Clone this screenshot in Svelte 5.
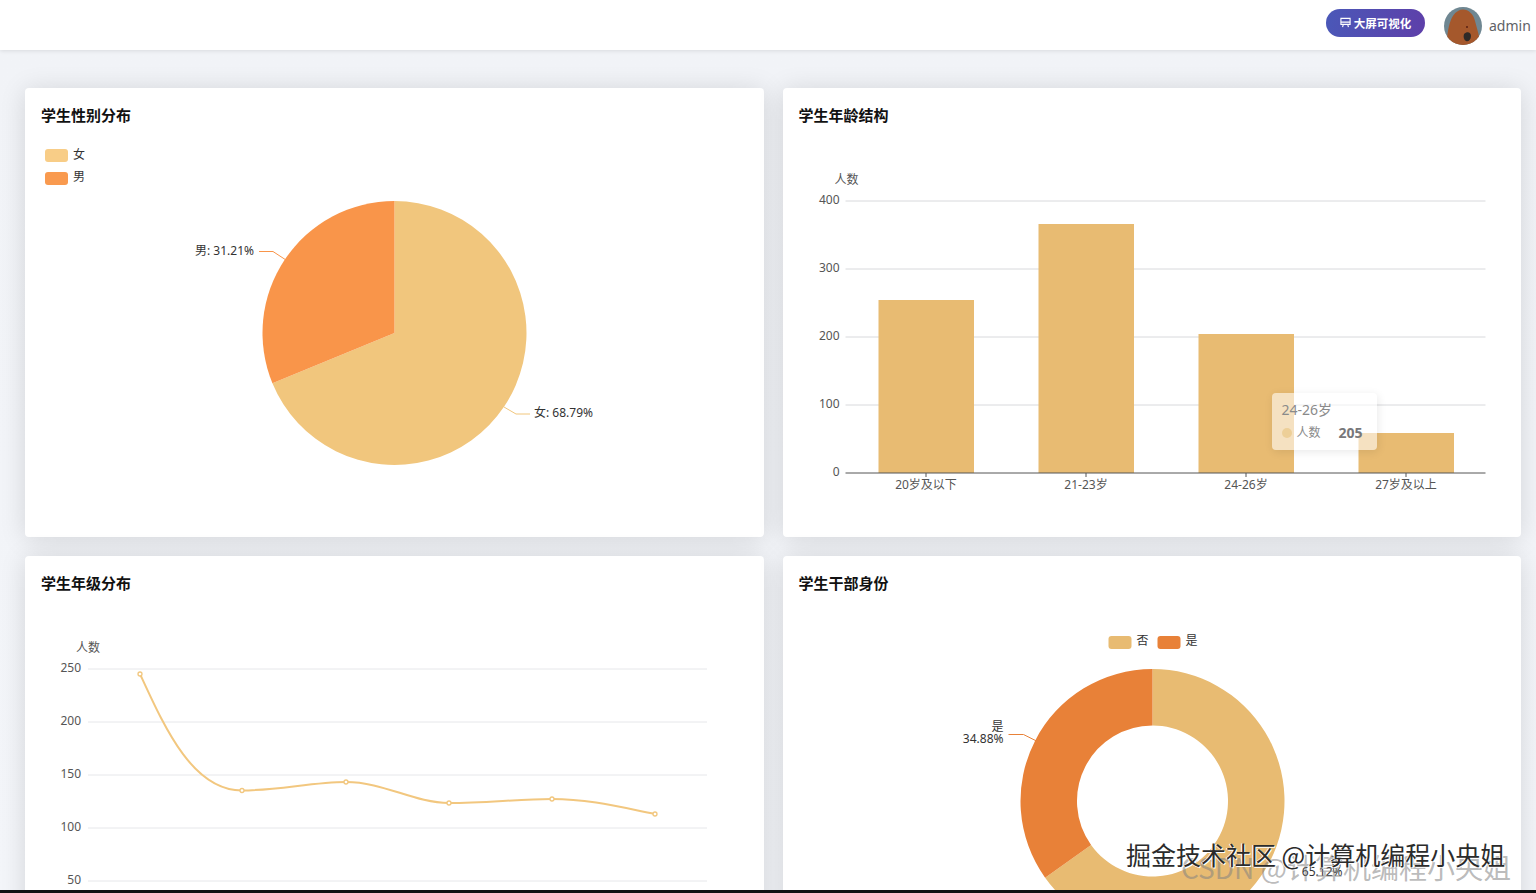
<script>
  // chart data, coordinates are screen px (viewBox of each svg is set to its place on the page)
  const polar = (cx, cy, r, pct) => {
    const a = (pct / 100) * Math.PI * 2;
    return [cx + r * Math.sin(a), cy - r * Math.cos(a)];
  };

  const slice = (cx, cy, r, r0, from, to) => {
    const large = to - from > 50 ? 1 : 0;
    const [x1, y1] = polar(cx, cy, r, from);
    const [x2, y2] = polar(cx, cy, r, to);
    if (!r0) return `M${cx},${cy} L${x1},${y1} A${r},${r} 0 ${large} 1 ${x2},${y2} Z`;
    const [x3, y3] = polar(cx, cy, r0, to);
    const [x4, y4] = polar(cx, cy, r0, from);
    return `M${x1},${y1} A${r},${r} 0 ${large} 1 ${x2},${y2} L${x3},${y3} A${r0},${r0} 0 ${large} 0 ${x4},${y4} Z`;
  };

  const barTicks = [
    { label: 400, y: 201 },
    { label: 300, y: 269 },
    { label: 200, y: 337 },
    { label: 100, y: 405 }
  ];
  const bars = [
    { name: '20岁及以下', x: 878, top: 300 },
    { name: '21-23岁', x: 1038, top: 224 },
    { name: '24-26岁', x: 1198, top: 334 },
    { name: '27岁及以上', x: 1358, top: 433 }
  ];

  const lineTicks = [
    { label: 250, y: 669 },
    { label: 200, y: 722 },
    { label: 150, y: 775 },
    { label: 100, y: 828 },
    { label: 50, y: 881 }
  ];
  const points = [[140, 674], [242, 790.5], [346, 782], [449, 803], [552, 799], [655, 814]];
  const linePath =
    'M140,674 C164,726 192,790.5 242,790.5 C276,790.5 314,782 346,782 C384,782 414,803 449,803 C486,803 518,799 552,799 C590,799 624,808 655,814';
</script>

<div class="page">
  <header class="topbar">
    <button class="screen-btn">
      <svg width="11" height="11" viewBox="0 0 12 12" fill="none" stroke="#fff" stroke-width="1.2">
        <path d="M1 1.5h10v6.5H1z" />
        <path d="M1 5.6h10M3.6 8l-.8 3M8.4 8l.8 3" />
      </svg>
      大屏可视化
    </button>
    <svg class="avatar" width="38" height="38" viewBox="0 0 38 38">
      <defs><clipPath id="av"><circle cx="19" cy="19" r="19" /></clipPath></defs>
      <g clip-path="url(#av)">
        <rect width="38" height="38" fill="#6f8792" />
        <path d="M3 38 C3 24 6 8 14 4 C21 0 29 5 31 14 C33 22 36 30 36 38 Z" fill="#a5582c" />
        <path d="M20 27 C23 24 27 25 27 29 C27 33 24 35 22 34 C20 33 19 30 20 27 Z" fill="#2e2a28" />
        <circle cx="23" cy="20" r="1" fill="#5a1f12" />
      </g>
    </svg>
    <span class="user">admin</span>
    <span class="caret"></span>
  </header>

  <main class="board">
    <section class="card">
      <h3>学生性别分布</h3>
      <svg class="chart" viewBox="25 142 738.5 395">
        <rect x="45" y="149" width="23" height="13" rx="3" fill="#f8cd87" />
        <text x="73" y="159">女</text>
        <rect x="45" y="172" width="23" height="13" rx="3" fill="#f99a4f" />
        <text x="73" y="181">男</text>
        <path d={slice(394.5, 333, 132, 0, 0, 68.79)} fill="#f1c67d" />
        <path d={slice(394.5, 333, 132, 0, 68.79, 100)} fill="#f9954a" />
        <path d="M259,251.5 H273 L286,260" class="leader" stroke="#f9954a" />
        <path d="M530,414 H516 L504,407" class="leader" stroke="#f1c67d" />
        <text x="254" y="255" text-anchor="end">男: 31.21%</text>
        <text x="534" y="417">女: 68.79%</text>
      </svg>
    </section>

    <section class="card">
      <h3>学生年龄结构</h3>
      <svg class="chart" viewBox="782.5 142 738.5 395">
        <text x="846" y="184" text-anchor="middle" class="muted">人数</text>
        {#each barTicks as t}
          <line x1="845" x2="1485" y1={t.y} y2={t.y} class="grid" />
          <text x="839" y={t.y + 3} text-anchor="end" class="muted">{t.label}</text>
        {/each}
        <text x="839" y="476" text-anchor="end" class="muted">0</text>
        {#each bars as b}
          <rect x={b.x} y={b.top} width="95.5" height={473 - b.top} fill="#e8bb72" />
          <line x1={b.x + 47.5} x2={b.x + 47.5} y1="473" y2="477" class="axis" />
          <text x={b.x + 47.5} y="489" text-anchor="middle" class="muted">{b.name}</text>
        {/each}
        <line x1="845" x2="1485" y1="473" y2="473" class="axis" />
      </svg>
      <div class="tip">
        <div class="tip-name">24-26岁</div>
        <div class="tip-row">
          <i></i><span>人数</span><b>205</b>
        </div>
      </div>
    </section>

    <section class="card">
      <h3>学生年级分布</h3>
      <svg class="chart" viewBox="25 610 738.5 395">
        <text x="88" y="652" text-anchor="middle" class="muted">人数</text>
        {#each lineTicks as t}
          <line x1="88" x2="707" y1={t.y} y2={t.y} class="grid light" />
          <text x="81" y={t.y + 3} text-anchor="end" class="muted">{t.label}</text>
        {/each}
        <path d={linePath} fill="none" stroke="#f2c77f" stroke-width="2" />
        {#each points as p}
          <circle cx={p[0]} cy={p[1]} r="2" fill="#fff" stroke="#f2c77f" stroke-width="1.3" />
        {/each}
      </svg>
    </section>

    <section class="card">
      <h3>学生干部身份</h3>
      <svg class="chart" viewBox="782.5 610 738.5 395">
        <rect x="1108" y="636" width="23" height="13" rx="3" fill="#e8bb72" />
        <text x="1136" y="645">否</text>
        <rect x="1157" y="636" width="23" height="13" rx="3" fill="#e88138" />
        <text x="1185" y="645">是</text>
        <path d={slice(1152, 801, 132, 75.5, 0, 65.12)} fill="#e8bb72" />
        <path d={slice(1152, 801, 132, 75.5, 65.12, 100)} fill="#e88138" />
        <path d="M1008,734.5 H1023 L1036,741" class="leader" stroke="#e88138" />
        <text x="1003" y="731" text-anchor="end">是</text>
        <text x="1003" y="743" text-anchor="end">34.88%</text>
        <text x="1342" y="866" text-anchor="end">否</text>
        <text x="1342" y="876" text-anchor="end">65.12%</text>
      </svg>
    </section>
  </main>

  <div class="strip"></div>

  <div class="mark-back">CSDN @计算机编程小央姐</div>
  <div class="mark-front">掘金技术社区 @计算机编程小央姐</div>
</div>

<style>
  :global(body) {
    margin: 0;
    background: #f3f5f9;
  }

  .page {
    position: relative;
    width: 100%;
    height: 100vh;
    display: flex;
    flex-direction: column;
    overflow: hidden;
    font-family: "Noto Sans", "Noto Sans CJK SC", sans-serif;
  }

  .topbar {
    flex: none;
    height: 50px;
    box-sizing: border-box;
    background: #fff;
    display: flex;
    align-items: center;
    justify-content: flex-end;
    padding: 0 0 6px 0;
    box-shadow: 0 1px 4px rgba(0, 0, 0, 0.1);
    position: relative;
    z-index: 1;
  }

  .screen-btn {
    width: 99px;
    height: 28px;
    border: none;
    border-radius: 14px;
    background: linear-gradient(100deg, #4a58b8, #5e3fa9);
    color: #fff;
    font: 700 11.5px "Noto Sans CJK SC", sans-serif;
    display: flex;
    align-items: center;
    justify-content: center;
    gap: 3px;
    padding: 0;
    margin-top: 1px;
  }

  .avatar {
    margin-left: 19px;
    margin-top: 7px;
  }

  .user {
    margin-left: 7px;
    width: 47px;
    font-size: 14px;
    color: #606266;
    margin-top: 7px;
  }

  .caret {
    display: none;
  }

  .board {
    flex: 1;
    min-height: 0;
    overflow: hidden;
    box-sizing: border-box;
    padding: 38px 15px 0 25px;
    display: grid;
    grid-template-columns: 1fr 1fr;
    grid-auto-rows: 449px;
    gap: 19px;
    background: linear-gradient(#f1f3f7, #f3f5f9);
  }

  .card {
    position: relative;
    background: #fff;
    border-radius: 4px;
    box-shadow: 0 2px 26px rgba(0, 0, 0, 0.13);
  }

  h3 {
    margin: 0;
    height: 54px;
    box-sizing: border-box;
    padding: 16px 0 0 16px;
    font: 700 15px/22px "Noto Sans CJK SC", sans-serif;
    color: #111;
  }

  .chart {
    display: block;
    width: 100%;
    height: 395px;
    overflow: visible;
  }

  .chart text {
    font-size: 12px;
    fill: #333;
  }

  .chart text.muted {
    fill: #555;
  }

  .grid {
    stroke: #d8d9dc;
    stroke-width: 1;
  }

  .grid.light {
    stroke: #e6e7ea;
  }

  .axis {
    stroke: #555;
    stroke-width: 1;
  }

  .leader {
    fill: none;
    stroke-width: 1;
  }

  .tip {
    position: absolute;
    left: 489px;
    top: 305px;
    width: 105px;
    height: 57px;
    box-sizing: border-box;
    padding: 7px 10px;
    border-radius: 4px;
    background: rgba(255, 255, 255, 0.56);
    box-shadow: 1px 2px 10px rgba(0, 0, 0, 0.09);
    color: #8a8a8a;
    font-size: 14px;
    line-height: 20px;
  }

  .tip-row {
    display: flex;
    align-items: center;
    margin-top: 3px;
    font-size: 12px;
  }

  .tip-row i {
    width: 10px;
    height: 10px;
    border-radius: 50%;
    background: #edcf98;
    margin-right: 5px;
  }

  .tip-row b {
    margin-left: 18px;
    font-size: 14px;
    color: #77777a;
  }

  .strip {
    flex: none;
    height: 3px;
    background: #111;
    position: relative;
    z-index: 1;
  }

  .mark-front,
  .mark-back {
    position: absolute;
    white-space: nowrap;
    font-family: "Noto Sans CJK SC", sans-serif;
    z-index: 2;
  }

  .mark-front {
    left: 1126px;
    top: 836px;
    font-size: 25px;
    line-height: 36px;
    color: #2b2b2b;
    text-shadow: 1px 1px 0 #fff, -1px 0 0 #fff;
  }

  .mark-back {
    left: 1181px;
    top: 848px;
    font-size: 28px;
    line-height: 38px;
    color: rgba(130, 130, 130, 0.55);
  }
</style>
